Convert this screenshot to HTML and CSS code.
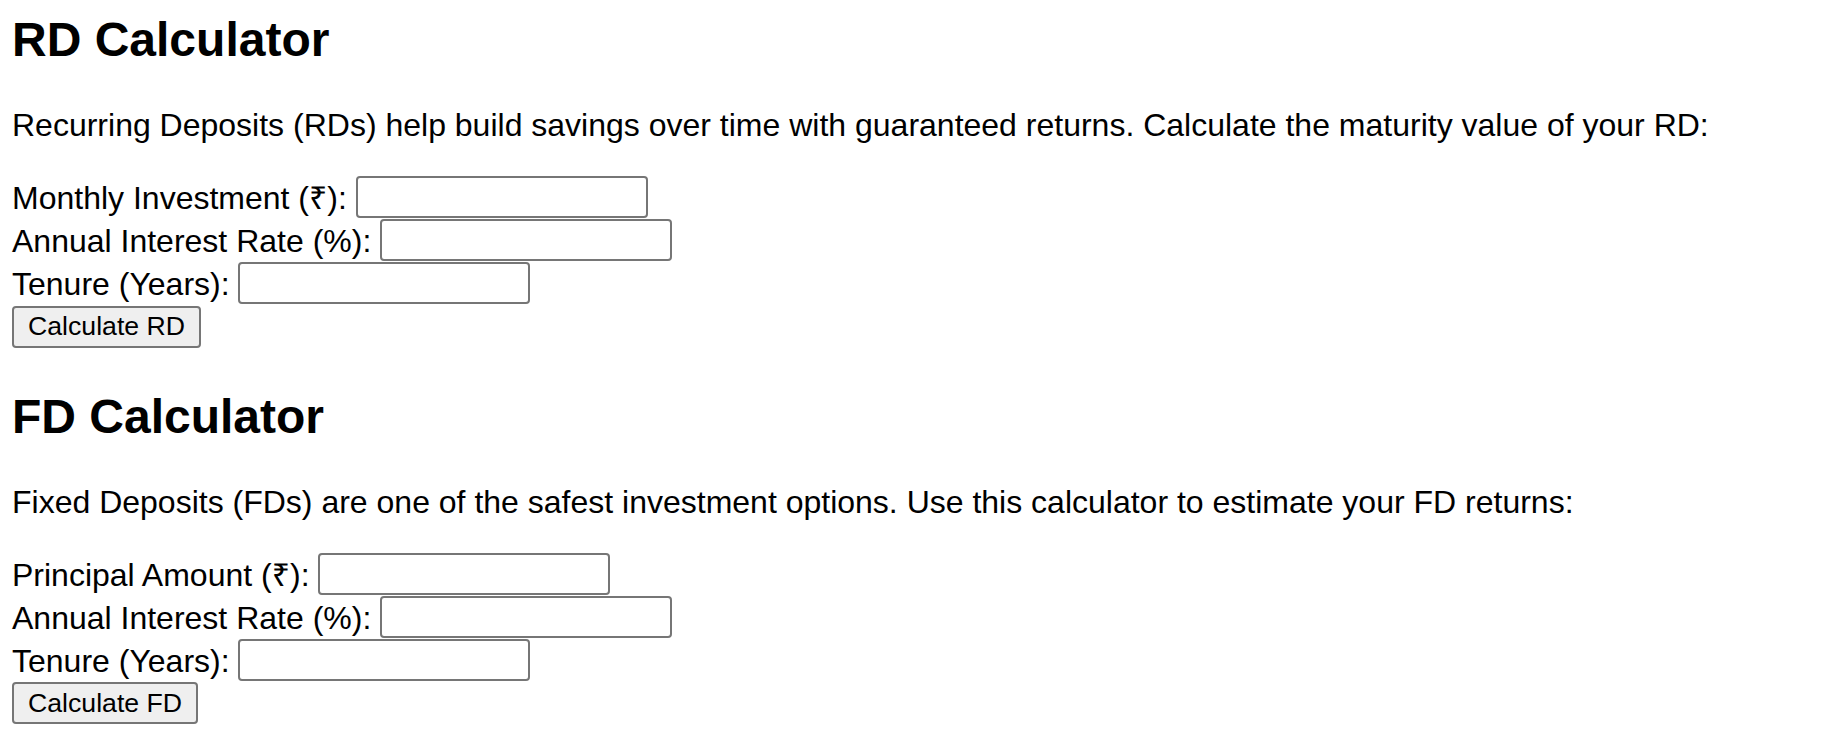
FILE: index.html
```html
<!DOCTYPE html>
<html lang="en">
<head>
<meta charset="utf-8">
<title>RD &amp; FD Calculator</title>
<link rel="stylesheet" href="styles.css">
</head>
<body>
<main class="page">
  <section class="calc">
    <h2 class="calc-title">RD Calculator</h2>
    <p class="calc-intro">Recurring Deposits (RDs) help build savings over time with guaranteed returns. Calculate the maturity value of your RD:</p>
    <form class="calc-form">
      <div class="field"><label for="rd-amount">Monthly Investment (₹):</label> <input class="text-input" type="text" id="rd-amount"></div>
      <div class="field"><label for="rd-rate">Annual Interest Rate (%):</label> <input class="text-input" type="text" id="rd-rate"></div>
      <div class="field"><label for="rd-years">Tenure (Years):</label> <input class="text-input" type="text" id="rd-years"></div>
      <div class="field"><button class="btn" type="button">Calculate RD</button></div>
    </form>
  </section>
  <section class="calc">
    <h2 class="calc-title">FD Calculator</h2>
    <p class="calc-intro">Fixed Deposits (FDs) are one of the safest investment options. Use this calculator to estimate your FD returns:</p>
    <form class="calc-form">
      <div class="field"><label for="fd-amount">Principal Amount (₹):</label> <input class="text-input" type="text" id="fd-amount"></div>
      <div class="field"><label for="fd-rate">Annual Interest Rate (%):</label> <input class="text-input" type="text" id="fd-rate"></div>
      <div class="field"><label for="fd-years">Tenure (Years):</label> <input class="text-input" type="text" id="fd-years"></div>
      <div class="field"><button class="btn" type="button">Calculate FD</button></div>
    </form>
  </section>
</main>
</body>
</html>
```

FILE: styles.css
```css
html, body {
  margin: 0;
  padding: 0;
  background: #ffffff;
}

body {
  font-family: "Liberation Sans", Arial, "Noto Sans", "DejaVu Sans", sans-serif;
  font-size: 32px;
  color: #000000;
}

.page {
  padding: 12px 12px 0 12px;
}

.calc-title {
  font-size: 48px;
  font-weight: bold;
  line-height: normal;
  margin: 40px 0;
}

.calc:first-child .calc-title {
  margin-top: 0;
}

.calc-intro {
  margin: 32px 0;
  line-height: normal;
}

.calc-form {
  margin: 0;
}

.field {
  height: 43.2px;
  line-height: 44px;
  white-space: nowrap;
}

.text-input {
  box-sizing: border-box;
  width: 292px;
  height: 42px;
  margin: 0;
  padding: 2px 4px;
  border: 2px solid #767676;
  border-radius: 4px;
  background: #ffffff;
  font-family: inherit;
  font-size: 26.67px;
  vertical-align: top;
}

.btn {
  box-sizing: border-box;
  height: 42px;
  margin: 0;
  padding: 0 14px;
  border: 2px solid #767676;
  border-radius: 4px;
  background: #efefef;
  color: #000000;
  font-family: inherit;
  font-size: 26.67px;
  line-height: normal;
  vertical-align: top;
}
```
